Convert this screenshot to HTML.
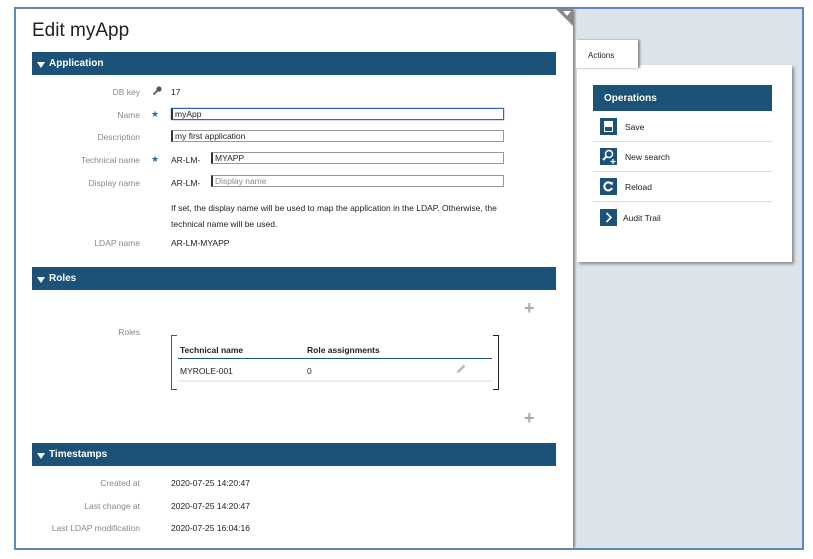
<!DOCTYPE html>
<html><head><style>
*{margin:0;padding:0;box-sizing:border-box}
body{width:813px;height:559px;background:#fff;font-family:"Liberation Sans",sans-serif;position:relative;overflow:hidden;font-size:8.5px;color:#222}
.frame{position:absolute;left:14px;top:7px;width:790px;height:543px;border:2px solid #5b87c5;background:#dce3ea}
.main{position:absolute;left:16px;top:9px;width:557px;height:539px;background:#fff;box-shadow:2px 0 2px #888}
.corner{position:absolute;left:556px;top:9px;width:0;height:0;border-left:17px solid transparent;border-top:17px solid #888}
.corner:after{content:"";position:absolute;left:-10px;top:-15px;border-left:4px solid transparent;border-right:4px solid transparent;border-top:5px solid #fff}
h1{position:absolute;left:32px;top:20px;font-size:19px;font-weight:normal;color:#222}
.bar{position:absolute;left:32px;width:524px;height:23px;background:#1c5278;color:#fff;font-weight:bold;font-size:10px;line-height:23px;padding-left:17px}
.bar:before{content:"";position:absolute;left:5px;top:10px;border-left:4px solid transparent;border-right:4px solid transparent;border-top:6px solid #fff}
.l{position:absolute;right:673px;color:#888;text-align:right;white-space:nowrap}
.t{position:absolute;white-space:nowrap}
.in{position:absolute;height:12px;border:1px solid #999;border-left:2px solid #333;background:#fff;padding-left:2px;line-height:10px;white-space:nowrap}
.star{position:absolute;left:151px;color:#2d6a9f;font-size:9px}
.plus{position:absolute;left:524px;color:#aaa;font-size:18px;font-weight:bold}
.tab{position:absolute;left:576px;top:40px;width:62px;height:28px;background:#fff;box-shadow:2px 0 2px #888;font-size:8px;padding:11px 0 0 12px}
.panel{position:absolute;left:577px;top:65px;width:215px;height:197px;background:#fff;box-shadow:2px 2px 3px #888}
.ops{position:absolute;left:593px;top:85px;width:179px;height:26px;background:#1c5278;color:#fff;font-weight:bold;font-size:10px;line-height:27px;padding-left:11px}
.row{position:absolute;left:593px;width:179px;height:30px;border-bottom:1px solid #ddd}
.ic{position:absolute;left:7px;top:6px;width:17px;height:17px;background:#1c5278}
.row span{position:absolute;left:32px;top:10px}
</style></head><body>
<div class="frame"></div>
<div class="main"></div>
<div class="corner"></div>
<h1>Edit myApp</h1>
<div class="bar" style="top:52px">Application</div>
<div class="l" style="top:87px">DB key</div>
<svg style="position:absolute;left:152px;top:86px" width="10" height="10" viewBox="0 0 10 10"><circle cx="7" cy="3" r="2.6" fill="#555"/><path d="M6 4 L1.5 8.5" stroke="#555" stroke-width="1.8"/></svg>
<div class="t" style="left:171px;top:87px">17</div>
<div class="l" style="top:110px">Name</div><div class="star" style="top:109px">★</div>
<div class="in" style="left:171px;top:108px;width:333px;border:1px solid #2f64c2;border-left:2px solid #333;box-shadow:0 0 1px #2f64c2">myApp</div>
<div class="l" style="top:132px">Description</div>
<div class="in" style="left:171px;top:130px;width:333px">my first application</div>
<div class="l" style="top:155px">Technical name</div><div class="star" style="top:154px">★</div>
<div class="t" style="left:171px;top:155px">AR-LM-</div>
<div class="in" style="left:211px;top:152px;width:293px">MYAPP</div>
<div class="l" style="top:178px">Display name</div>
<div class="t" style="left:171px;top:178px">AR-LM-</div>
<div class="in" style="left:211px;top:175px;width:293px;color:#888">Display name</div>
<div class="t" style="left:171px;top:200px;line-height:16px">If set, the display name will be used to map the application in the LDAP. Otherwise, the<br>technical name will be used.</div>
<div class="l" style="top:238px">LDAP name</div>
<div class="t" style="left:171px;top:238px">AR-LM-MYAPP</div>
<div class="bar" style="top:267px">Roles</div>
<div class="plus" style="top:298px">+</div>
<div class="l" style="top:327px">Roles</div>
<div style="position:absolute;left:171px;top:335px;width:6px;height:55px;border:1px solid #555;border-right:none"></div>
<div style="position:absolute;left:493px;top:335px;width:6px;height:55px;border:1px solid #222;border-left:none"></div>
<div class="t" style="left:180px;top:345px;font-weight:bold">Technical name</div>
<div class="t" style="left:307px;top:345px;font-weight:bold">Role assignments</div>
<div style="position:absolute;left:178px;top:358px;width:314px;height:1px;background:#1c5278"></div>
<div class="t" style="left:180px;top:366px">MYROLE-001</div>
<div class="t" style="left:307px;top:366px">0</div>
<svg style="position:absolute;left:456px;top:363px" width="11" height="11" viewBox="0 0 11 11"><path d="M2 9 L8.5 2.5" stroke="#bbb" stroke-width="2.5"/><path d="M1 10 L2 8" stroke="#bbb" stroke-width="1"/></svg>
<div style="position:absolute;left:178px;top:380px;width:314px;height:2px;background:#eee"></div>
<div class="plus" style="top:408px">+</div>
<div class="bar" style="top:443px">Timestamps</div>
<div class="l" style="top:478px">Created at</div><div class="t" style="left:171px;top:478px">2020-07-25 14:20:47</div>
<div class="l" style="top:501px">Last change at</div><div class="t" style="left:171px;top:501px">2020-07-25 14:20:47</div>
<div class="l" style="top:523px">Last LDAP modification</div><div class="t" style="left:171px;top:523px">2020-07-25 16:04:16</div>
<div class="panel"></div>
<div class="tab">Actions</div>
<div class="ops">Operations</div>
<div class="row" style="top:112px"><div class="ic"><div style="position:absolute;left:4px;top:3px;width:9px;height:11px;background:#fff"></div><div style="position:absolute;left:5px;top:9px;width:7px;height:4px;background:#1c5278"></div></div><span>Save</span></div>
<div class="row" style="top:142px"><div class="ic"><svg width="17" height="17" viewBox="0 0 17 17"><circle cx="9" cy="6" r="3.5" fill="none" stroke="#fff" stroke-width="1.5"/><path d="M6.5 8.5 L3 12" stroke="#fff" stroke-width="2"/><path d="M13 11v5M10.5 13.5h5" stroke="#fff" stroke-width="1.3"/></svg></div><span>New search</span></div>
<div class="row" style="top:172px"><div class="ic"><svg width="17" height="17" viewBox="0 0 17 17"><path d="M11.5 6 A4 4 0 1 0 12 10" fill="none" stroke="#fff" stroke-width="2"/><path d="M9.5 4.5 L13 4 L12.5 7.5Z" fill="#fff"/></svg></div><span>Reload</span></div>
<div class="row" style="top:203px;border:none"><div class="ic"><svg width="17" height="17" viewBox="0 0 17 17"><path d="M6.5 4 L11 8.5 L6.5 13" fill="none" stroke="#fff" stroke-width="1.6"/></svg></div><span style="left:30px">Audit Trail</span></div>
</body></html>
